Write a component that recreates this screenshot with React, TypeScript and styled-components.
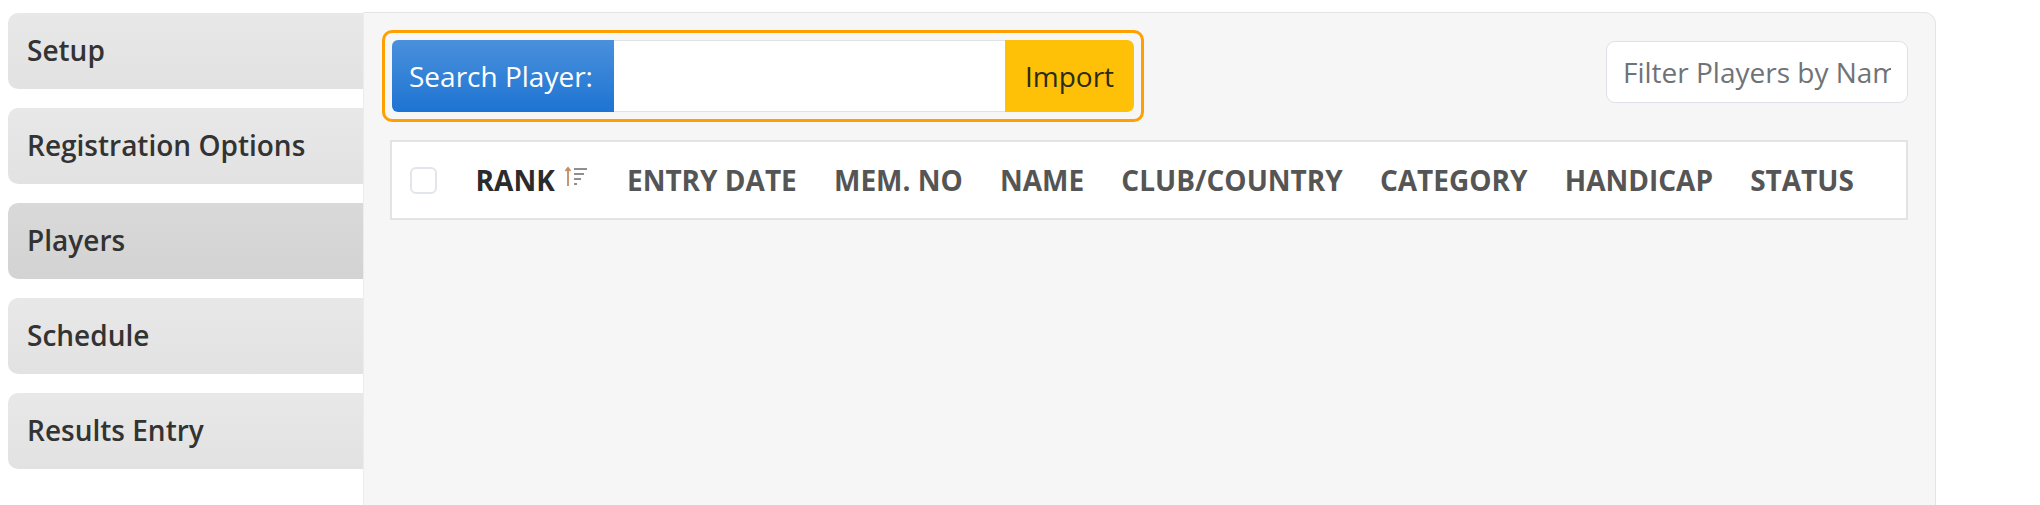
import React from "react";
import styled, { createGlobalStyle } from "styled-components";

const GlobalStyle = createGlobalStyle`
  html, body {
    margin: 0;
    padding: 0;
    background: #ffffff;
    font-family: "Open Sans", "Noto Sans", sans-serif;
    color: #333333;
  }
  * { box-sizing: border-box; }
`;

const Page = styled.div`
  display: flex;
  align-items: flex-start;
  width: 2040px;
  height: 505px;
  overflow: hidden;
  padding-left: 8px;
`;

const SideNav = styled.nav`
  display: flex;
  flex-direction: column;
  gap: 19px;
  width: 355px;
  padding-top: 13px;
  flex-shrink: 0;
`;

const NavTab = styled.div<{ $active?: boolean }>`
  height: 76px;
  display: flex;
  align-items: center;
  padding-left: 19px;
  padding-bottom: 3px;
  border-radius: 10px 0 0 10px;
  background: ${(p) =>
    p.$active
      ? "linear-gradient(180deg, #d9d9d9 0%, #d3d3d3 100%)"
      : "linear-gradient(180deg, #e8e8e8 0%, #e2e2e2 100%)"};
  font-size: 28px;
  font-weight: 600;
  color: #333333;
`;

const Panel = styled.main`
  width: 1573px;
  height: 520px;
  margin-top: 12px;
  background: #f6f6f6;
  border: 1px solid #e4e4e4;
  border-left-color: #ececec;
  border-radius: 0 12px 0 0;
  padding: 17px 27px 0 18px;
`;

const Toolbar = styled.div`
  display: flex;
  justify-content: space-between;
  align-items: flex-start;
`;

const SearchFrame = styled.div`
  width: 762px;
  height: 92px;
  padding: 7px;
  border: 3px solid #ff9f00;
  border-radius: 10px;
  display: flex;
`;

const SearchLabel = styled.span`
  display: flex;
  align-items: center;
  padding: 0 17px;
  width: 222px;
  background: linear-gradient(180deg, #4a90dc 0%, #1d74d2 100%);
  color: #ffffff;
  font-size: 28px;
  border-radius: 6px 0 0 6px;
  white-space: nowrap;
`;

const SearchInput = styled.input`
  flex: 1;
  min-width: 0;
  border: 1px solid #dfe3e8;
  border-left: none;
  border-right: none;
  background: #ffffff;
  font-family: inherit;
  font-size: 28px;
  outline: none;
`;

const ImportButton = styled.button`
  width: 129px;
  border: none;
  background: #ffc107;
  color: #2b2b1a;
  font-family: inherit;
  font-size: 28px;
  border-radius: 0 7px 7px 0;
  padding: 0;
`;

const FilterInput = styled.input`
  margin-top: 11px;
  width: 302px;
  height: 62px;
  border: 1px solid #dde1e6;
  border-radius: 9px;
  background: #ffffff;
  padding: 0 16px;
  font-family: inherit;
  font-size: 28px;
  color: #333333;
  outline: none;
  &::placeholder {
    color: #6f7378;
  }
`;

const TableHead = styled.div`
  margin: 18px 0 0 8px;
  height: 80px;
  background: #ffffff;
  border: 2px solid #e3e3e3;
  display: flex;
  align-items: center;
  padding-left: 18px;
`;

const CheckBox = styled.span`
  width: 27px;
  height: 27px;
  border: 2px solid #e2e6ea;
  border-radius: 6px;
  margin-right: 20px;
  flex-shrink: 0;
`;

const HeadCell = styled.div<{ $sorted?: boolean }>`
  display: flex;
  align-items: center;
  padding: 0 18.6px;
  font-size: 28px;
  font-weight: 700;
  color: ${(p) => (p.$sorted ? "#2b2b2b" : "#555555")};
  white-space: nowrap;
`;

const SortIcon = () => (
  <svg width="26" height="24" viewBox="0 0 26 24" style={{ marginLeft: 9, marginTop: -6 }}>
    <path d="M4 21V3M1.5 6l2.5-3 2.5 3" stroke="#c48a62" strokeWidth="1.8" fill="none" />
    <path d="M10 4h13M10 9h10M10 14h7M10 19h3" stroke="#8f8f8f" strokeWidth="1.8" />
  </svg>
);

const tabs = ["Setup", "Registration Options", "Players", "Schedule", "Results Entry"];
const columns = ["ENTRY DATE", "MEM. NO", "NAME", "CLUB/COUNTRY", "CATEGORY", "HANDICAP", "STATUS"];

export default function App() {
  return (
    <>
      <GlobalStyle />
      <Page>
        <SideNav>
          {tabs.map((t) => (
            <NavTab key={t} $active={t === "Players"}>
              {t}
            </NavTab>
          ))}
        </SideNav>
        <Panel>
          <Toolbar>
            <SearchFrame>
              <SearchLabel>Search Player:</SearchLabel>
              <SearchInput />
              <ImportButton>Import</ImportButton>
            </SearchFrame>
            <FilterInput placeholder="Filter Players by Name" />
          </Toolbar>
          <TableHead>
            <CheckBox />
            <HeadCell $sorted>
              RANK
              <SortIcon />
            </HeadCell>
            {columns.map((c) => (
              <HeadCell key={c}>{c}</HeadCell>
            ))}
          </TableHead>
        </Panel>
      </Page>
    </>
  );
}
